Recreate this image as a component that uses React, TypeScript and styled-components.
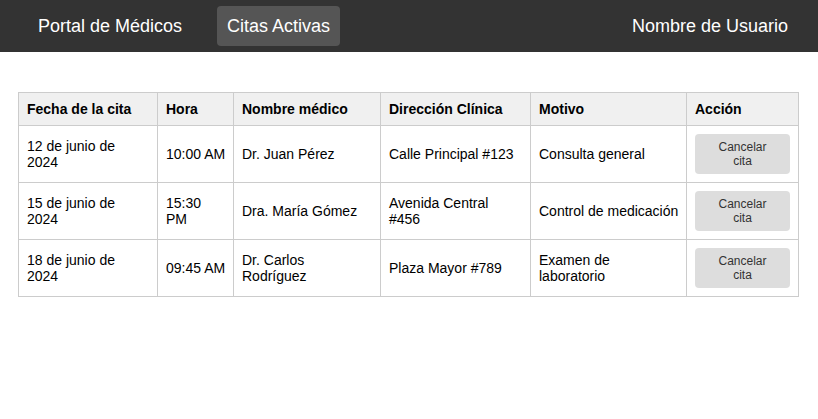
import styled, { createGlobalStyle } from 'styled-components';

const GlobalStyle = createGlobalStyle`
  body {
    margin: 0;
    font-family: "Liberation Sans", Arial, sans-serif;
    background: #fff;
    color: #000;
  }
`;

const NavBar = styled.nav`
  display: flex;
  align-items: center;
  height: 52px;
  padding: 0 30px 0 28px;
  background: #333;
`;

const NavLink = styled.a<{ $active?: boolean }>`
  display: block;
  padding: 9px 10px;
  margin-right: 25px;
  border-radius: 4px;
  font-size: 18px;
  line-height: 22px;
  color: #fff;
  text-decoration: none;
  background: ${(p) => (p.$active ? '#555' : 'transparent')};
`;

const UserName = styled.span`
  margin-left: auto;
  font-size: 18px;
  color: #fff;
`;

const Main = styled.main`
  padding: 40px 20px 0 18px;
`;

const Table = styled.table`
  width: 780px;
  border-collapse: collapse;
  table-layout: fixed;
  font-size: 14px;
`;

const HeadCell = styled.th`
  padding: 8px;
  border: 1px solid #ccc;
  background: #f0f0f0;
  text-align: left;
  font-weight: 700;
  line-height: 16px;
`;

const Cell = styled.td<{ $nowrap?: boolean }>`
  padding: 8px;
  border: 1px solid #ccc;
  line-height: 16px;
  vertical-align: middle;
  white-space: ${(p) => (p.$nowrap ? 'nowrap' : 'normal')};
`;

const CancelButton = styled.button`
  display: block;
  width: 100%;
  padding: 6px 18px;
  border: none;
  border-radius: 4px;
  background: #ddd;
  color: #333;
  font-family: "Liberation Sans", Arial, sans-serif;
  font-size: 12px;
  line-height: 14px;
  cursor: pointer;
`;

const columns = [
  { title: 'Fecha de la cita', width: 139 },
  { title: 'Hora', width: 76 },
  { title: 'Nombre médico', width: 147 },
  { title: 'Dirección Clínica', width: 150 },
  { title: 'Motivo', width: 156 },
  { title: 'Acción', width: 112 },
];

const citas = [
  {
    fecha: '12 de junio de 2024',
    hora: <>10:00 AM</>,
    medico: 'Dr. Juan Pérez',
    direccion: 'Calle Principal #123',
    motivo: 'Consulta general',
    motivoNowrap: true,
  },
  {
    fecha: '15 de junio de 2024',
    hora: (
      <>
        15:30
        <br />
        PM
      </>
    ),
    medico: 'Dra. María Gómez',
    direccion: 'Avenida Central #456',
    motivo: 'Control de medicación',
    motivoNowrap: true,
  },
  {
    fecha: '18 de junio de 2024',
    hora: <>09:45 AM</>,
    medico: 'Dr. Carlos Rodríguez',
    direccion: 'Plaza Mayor #789',
    motivo: 'Examen de laboratorio',
    motivoNowrap: false,
  },
];

const App = () => {
  return (
    <>
      <GlobalStyle />
      <NavBar>
        <NavLink>Portal de Médicos</NavLink>
        <NavLink $active>Citas Activas</NavLink>
        <UserName>Nombre de Usuario</UserName>
      </NavBar>
      <Main>
        <Table>
          <colgroup>
            {columns.map((c) => (
              <col key={c.title} style={{ width: c.width }} />
            ))}
          </colgroup>
          <thead>
            <tr>
              {columns.map((c) => (
                <HeadCell key={c.title}>{c.title}</HeadCell>
              ))}
            </tr>
          </thead>
          <tbody>
            {citas.map((cita) => (
              <tr key={cita.fecha}>
                <Cell>{cita.fecha}</Cell>
                <Cell $nowrap>{cita.hora}</Cell>
                <Cell>{cita.medico}</Cell>
                <Cell>{cita.direccion}</Cell>
                <Cell $nowrap={cita.motivoNowrap}>{cita.motivo}</Cell>
                <Cell>
                  <CancelButton>Cancelar cita</CancelButton>
                </Cell>
              </tr>
            ))}
          </tbody>
        </Table>
      </Main>
    </>
  );
};

export default App;
